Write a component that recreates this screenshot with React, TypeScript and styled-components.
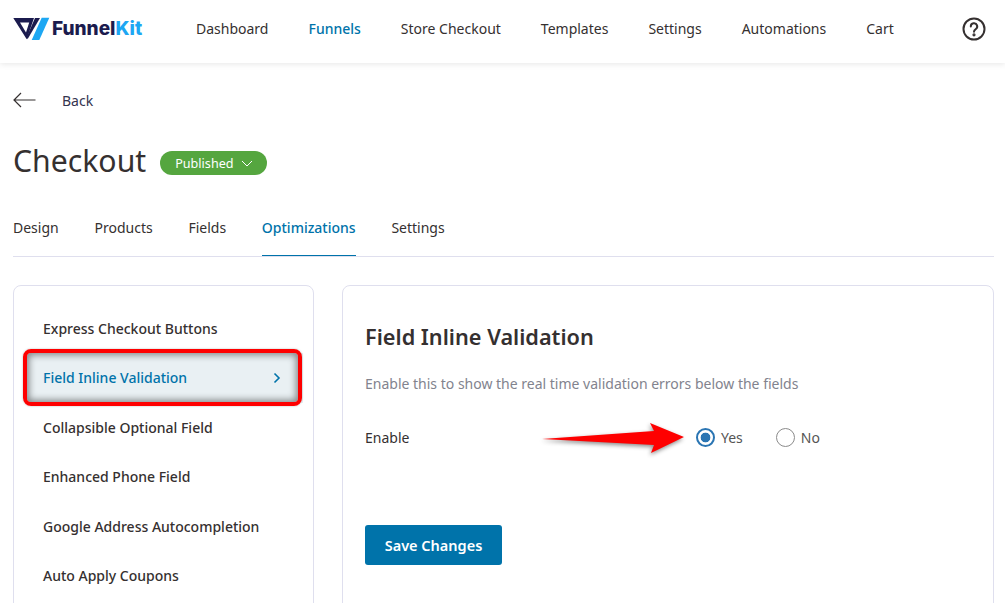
import React from "react";
import styled, { createGlobalStyle } from "styled-components";

const Global = createGlobalStyle`
  html, body { margin: 0; padding: 0; background: #fff; overflow: hidden; }
  body { font-family: "Noto Sans", "Open Sans", sans-serif; color: #353030; }
`;
const Page = styled.div`
  width: 1005px; height: 603px; overflow: hidden; position: relative; background: #fff;
`;
const Header = styled.header`
  height: 63px; display: flex; align-items: center; padding: 0 19px 6px 13px;
  box-shadow: 0 1px 6px rgba(0,0,0,.1); box-sizing: border-box;
`;
const Logo = styled.div`
  display: flex; align-items: center; gap: 2px; width: 183px; flex: none;
`;
const LogoText = styled.span`
  font-family: "Inter", sans-serif; font-size: 19px; font-weight: 800; color: #1b1b4e;
  em { font-style: normal; color: #1da7f3; }
`;
const Nav = styled.nav`display: flex; gap: 40px; flex: 1;`;
const NavItem = styled.a<{ $active?: boolean }>`
  font-size: 14px; color: ${p => (p.$active ? "#0073aa" : "#353030")}; font-weight: ${p => (p.$active ? 500 : 400)};
`;
const Content = styled.main`padding: 0 0 0 13px;`;
const BackRow = styled.div`
  display: flex; align-items: center; gap: 26px; height: 74px; font-size: 14px; color: #34344e;
`;
const TitleRow = styled.div`display: flex; align-items: center; gap: 14px; height: 52px;`;
const Title = styled.h1`margin: 0; padding-bottom: 4px; font-size: 30.2px; font-weight: 400; color: #353030; line-height: 48px;`;
const Badge = styled.div`
  display: flex; align-items: center; gap: 7px; height: 24px; padding: 1px 14px 0 15px; border-radius: 12px; box-sizing: border-box;
  background: #55a63f; color: #fff; font-size: 12.6px;
`;
const Tabs = styled.div`
  display: flex; gap: 35.75px; height: 54px; margin: 13px 11px 0 0; border-bottom: 1px solid #dfdfee; box-sizing: content-box;
`;
const Tab = styled.div<{ $active?: boolean }>`
  display: flex; align-items: center; height: 54px; box-sizing: border-box; padding-bottom: 3px; font-size: 14px;
  color: ${p => (p.$active ? "#0073aa" : "#353030")}; font-weight: ${p => (p.$active ? 500 : 400)};
  border-bottom: 1px solid ${p => (p.$active ? "#0073aa" : "transparent")};
`;
const Columns = styled.div`display: flex; gap: 28px; margin: 28px 11px 0 0;`;
const SideCard = styled.aside`
  width: 301px; height: 340px; border: 1px solid #dfdfee; border-radius: 8px; box-sizing: border-box; flex: none;
  padding: 17.6px 10px 0 11px; display: flex; flex-direction: column;
`;
const SideItem = styled.div<{ $active?: boolean }>`
  height: 49.5px; flex: none; display: flex; align-items: center; justify-content: space-between; padding: 0 22px 0 18px;
  font-size: 14px; font-weight: 500;
  color: ${p => (p.$active ? "#0073aa" : "#353030")};
  background: ${p => (p.$active ? "#e9f0f3" : "transparent")};
  position: relative;
`;
const Highlight = styled.span`
  position: absolute; inset: -4px 1px -3px -2px; border: 4px solid #fe0000; border-radius: 8px;
  box-shadow: inset 0 0 7px 2px rgba(0,0,0,.45), 0 0 2px rgba(0,0,0,.3); pointer-events: none;
`;
const MainCard = styled.section`
  flex: 1; height: 340px; border: 1px solid #dfdfee; border-radius: 8px; box-sizing: border-box; padding: 36px 22px 0 22px;
`;
const CardTitle = styled.h2`margin: 0; font-size: 21.7px; font-weight: 600; color: #353030; line-height: 30px;`;
const Desc = styled.p`margin: 20px 0 0; font-size: 14px; color: #82838e; line-height: 24px;`;
const Row = styled.div`display: flex; align-items: center; margin-top: 29px; height: 24px; font-size: 14px; position: relative;`;
const Label = styled.div`width: 331px; flex: none; color: #353030;`;
const Radios = styled.div`display: flex; gap: 33px;`;
const RadioOpt = styled.label`display: flex; align-items: center; gap: 6px; color: #555;`;
const Radio = styled.span<{ $on?: boolean }>`
  width: 19px; height: 19px; border-radius: 50%; box-sizing: border-box; position: relative;
  border: ${p => (p.$on ? "2.5px solid #2a75b3" : "1.5px solid #8b8b8b")};
  background: ${p => (p.$on ? "radial-gradient(circle, #2a75b3 0 4.5px, #fff 5.2px)" : "#fff")};
`;
const ArrowMark = styled.svg`position: absolute; left: 177px; top: -5px; filter: drop-shadow(-1px 2px 2px rgba(0,0,0,.45));`;
const SaveButton = styled.button`
  display: block; margin-top: 76px; width: 137px; height: 40px; border: 0; border-radius: 3px; background: #0073aa;
  color: #fff; font: 600 14.5px "Noto Sans", sans-serif;
`;

const nav = ["Dashboard", "Funnels", "Store Checkout", "Templates", "Settings", "Automations", "Cart"];
const tabs = ["Design", "Products", "Fields", "Optimizations", "Settings"];
const side = ["Express Checkout Buttons", "Field Inline Validation", "Collapsible Optional Field", "Enhanced Phone Field", "Google Address Autocompletion", "Auto Apply Coupons"];

export default function App() {
  return (
    <Page>
      <Global />
      <Header>
        <Logo>
          <svg width="37" height="24" viewBox="0 0 37 24">
            <path d="M0.3 1H21L13.7 22.3Z M7 5.5L13 15.5L16.2 5.5Z" fill="#1b1b4e" fillRule="evenodd" />
            <path d="M22 1H27L14.5 22.3L13.7 20Z" fill="#1b1b4e" />
            <path d="M28.7 .7H36.3L26.3 23H18.7Z" fill="#1da7f3" />
          </svg>
          <LogoText>Funnel<em>Kit</em></LogoText>
        </Logo>
        <Nav>
          {nav.map(n => <NavItem key={n} $active={n === "Funnels"}>{n}</NavItem>)}
        </Nav>
        <svg width="24" height="24" viewBox="0 0 24 24" fill="none" stroke="#353030" strokeWidth="2">
          <circle cx="12" cy="12" r="10.5" />
          <path d="M8.8 9.5a3.2 3.2 0 1 1 4.7 2.8c-1 .6-1.5 1.1-1.5 2.4" strokeLinecap="round" />
          <circle cx="12" cy="17.8" r=".6" fill="#353030" />
        </svg>
      </Header>
      <Content>
        <BackRow>
          <svg width="23" height="16" viewBox="0 0 23 16" fill="none" stroke="#353030" strokeWidth="1.2">
            <path d="M22.5 8H1M8 1L1 8l7 7" />
          </svg>
          Back
        </BackRow>
        <TitleRow>
          <Title>Checkout</Title>
          <Badge>
            Published
            <svg width="12" height="7" viewBox="0 0 12 7" fill="none" stroke="#fff" strokeWidth="1">
              <path d="M1 1l5 5 5-5" />
            </svg>
          </Badge>
        </TitleRow>
        <Tabs>
          {tabs.map(t => <Tab key={t} $active={t === "Optimizations"}>{t}</Tab>)}
        </Tabs>
        <Columns>
          <SideCard>
            {side.map(s => (
              <SideItem key={s} $active={s === "Field Inline Validation"}>
                {s}
                {s === "Field Inline Validation" && (
                  <>
                    <svg width="8" height="12" viewBox="0 0 8 12" fill="none" stroke="#0073aa" strokeWidth="1.6">
                      <path d="M1.5 1.5L6 6l-4.5 4.5" />
                    </svg>
                    <Highlight />
                  </>
                )}
              </SideItem>
            ))}
          </SideCard>
          <MainCard>
            <CardTitle>Field Inline Validation</CardTitle>
            <Desc>Enable this to show the real time validation errors below the fields</Desc>
            <Row>
              <Label>Enable</Label>
              <Radios>
                <RadioOpt><Radio $on />Yes</RadioOpt>
                <RadioOpt><Radio />No</RadioOpt>
              </Radios>
              <ArrowMark width="146" height="38" viewBox="0 0 146 38">
                <path d="M0 19L112 11L108 3L142 17L109 33L112 25Z" fill="#fe0000" />
              </ArrowMark>
            </Row>
            <SaveButton>Save Changes</SaveButton>
          </MainCard>
        </Columns>
      </Content>
    </Page>
  );
}
